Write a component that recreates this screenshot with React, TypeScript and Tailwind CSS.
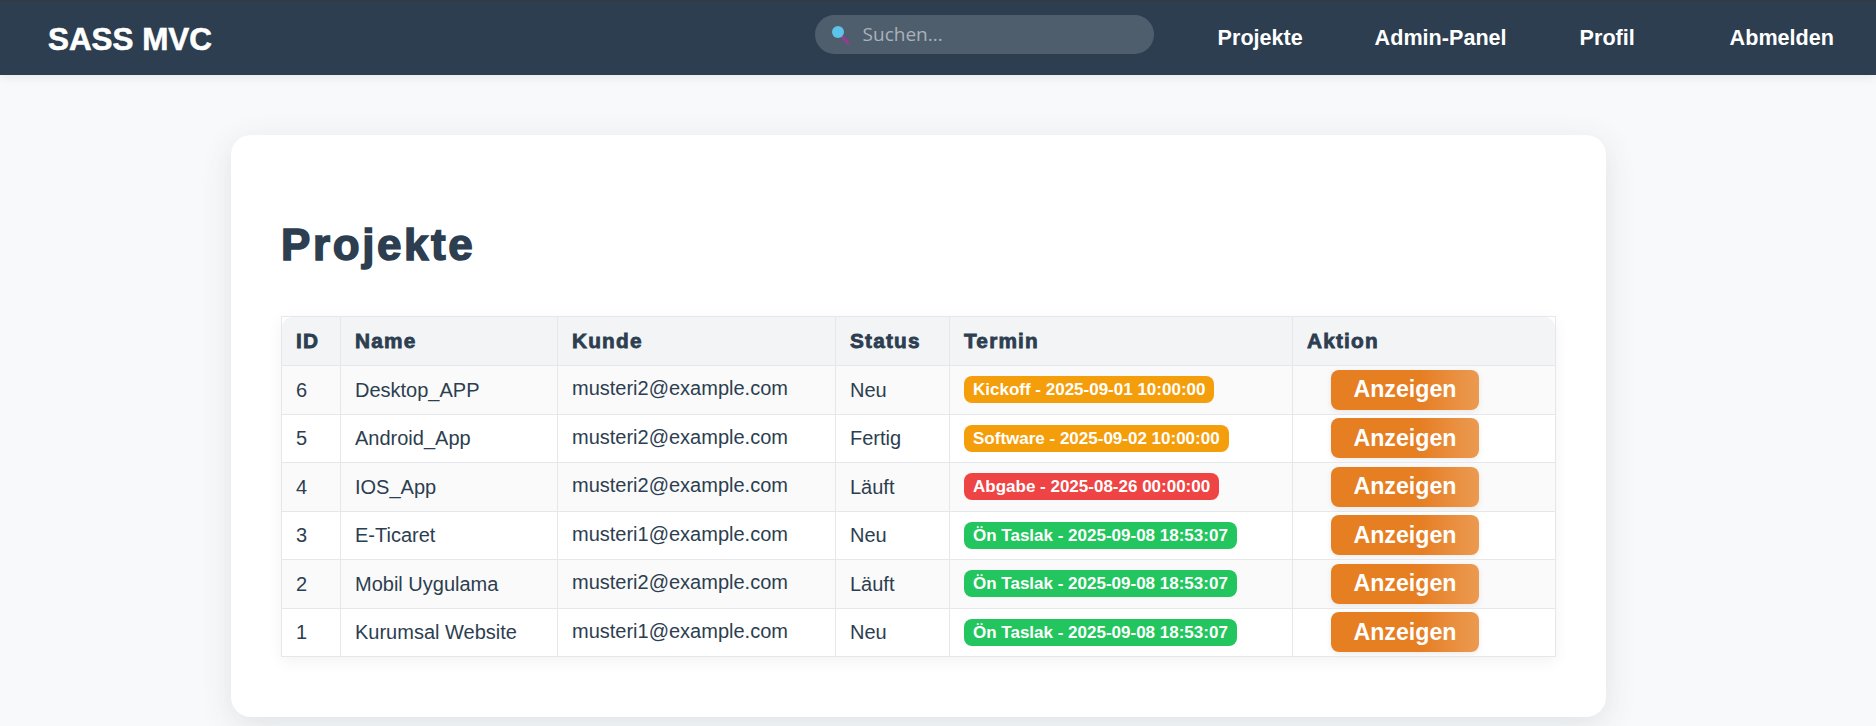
const links = ['Projekte', 'Admin-Panel', 'Profil', 'Abmelden'];

const rows = [
  { id: 6, name: 'Desktop_APP', customer: 'musteri2@example.com', status: 'Neu', date: 'Kickoff - 2025-09-01 10:00:00', color: 'bg-[#f59e0b]' },
  { id: 5, name: 'Android_App', customer: 'musteri2@example.com', status: 'Fertig', date: 'Software - 2025-09-02 10:00:00', color: 'bg-[#f59e0b]' },
  { id: 4, name: 'IOS_App', customer: 'musteri2@example.com', status: 'Läuft', date: 'Abgabe - 2025-08-26 00:00:00', color: 'bg-[#ef4444]' },
  { id: 3, name: 'E-Ticaret', customer: 'musteri1@example.com', status: 'Neu', date: 'Ön Taslak - 2025-09-08 18:53:07', color: 'bg-[#22c55e]' },
  { id: 2, name: 'Mobil Uygulama', customer: 'musteri2@example.com', status: 'Läuft', date: 'Ön Taslak - 2025-09-08 18:53:07', color: 'bg-[#22c55e]' },
  { id: 1, name: 'Kurumsal Website', customer: 'musteri1@example.com', status: 'Neu', date: 'Ön Taslak - 2025-09-08 18:53:07', color: 'bg-[#22c55e]' },
];

const headers = [
  { label: 'ID', width: 'w-[59px]' },
  { label: 'Name', width: 'w-[217px]' },
  { label: 'Kunde', width: 'w-[278px]' },
  { label: 'Status', width: 'w-[114px]' },
  { label: 'Termin', width: 'w-[343px]' },
  { label: 'Aktion', width: 'w-[263px]' },
];

const SearchIcon = () => (
  <svg className="h-[20px] w-[18px] shrink-0" viewBox="0 0 18 20">
    <path d="M10 11.5l6 6.5" stroke="#8e3f8f" strokeWidth="3.4" strokeLinecap="round" />
    <circle cx="6" cy="7" r="6" fill="#5bc4e8" />
  </svg>
);

const App = () => {
  return (
    <div className="min-h-[726px] bg-[#f8f9fa] font-['Liberation_Sans',sans-serif] text-[#2c3e50]">
      <nav className="relative flex h-[75px] items-center justify-between border-t border-[#333a40] bg-[#2c3e50] pl-[48px] pr-[42px] shadow-[0_2px_10px_rgba(0,0,0,0.08)]">
        <div className="mt-[4px] text-[31.4px] font-bold text-white [-webkit-text-stroke:0.6px_white]">SASS MVC</div>
        <div className="flex items-center">
          <div className="mb-[7px] mr-[64px] flex h-[39px] w-[339px] items-center rounded-[20px] bg-[#4f5e6d] pl-[17px]">
            <SearchIcon />
            <span className="ml-[13px] font-['Open_Sans',sans-serif] text-[19px] text-[#a9b2ba]">Suchen...</span>
          </div>
          <div className="flex">
            {links.map((link, i) => (
              <a
                key={link}
                className={`text-[21.6px] font-bold text-white ${i === 0 ? 'w-[157px]' : i === 1 ? 'w-[205px]' : i === 2 ? 'w-[150px]' : ''}`}
              >
                {link}
              </a>
            ))}
          </div>
        </div>
      </nav>

      <main className="ml-[231px] mt-[60px] w-[1375px] rounded-[20px] bg-white px-[50px] pb-[60px] pt-[84px] shadow-[0_8px_32px_rgba(44,62,80,0.12)]">
        <h1 className="mb-[45px] text-[44px] font-bold leading-[52px] tracking-[2.6px] [-webkit-text-stroke:1.5px_#2c3e50]">Projekte</h1>
        <table className="w-[1274px] table-fixed border-collapse text-[20px] shadow-[0_5px_15px_rgba(0,0,0,0.05)]">
          <thead>
            <tr className="h-[49px] bg-[#f3f4f6]">
              {headers.map((h, i) => (
                <th
                  key={h.label}
                  className={`${h.width} relative border border-[#e5e7eb] px-[14px] text-left text-[20.8px] font-bold tracking-[1.2px] [-webkit-text-stroke:0.8px_#2c3e50]`}
                >
                  {i === 0 && <span className="absolute left-0 top-0 h-[10px] w-[10px] bg-[radial-gradient(circle_at_100%_100%,transparent_9.5px,white_10px)]" />}
                  {i === 5 && <span className="absolute right-0 top-0 h-[10px] w-[10px] bg-[radial-gradient(circle_at_0%_100%,transparent_9.5px,white_10px)]" />}
                  {h.label}
                </th>
              ))}
            </tr>
          </thead>
          <tbody>
            {rows.map((row, i) => (
              <tr key={row.id} className={`h-[48.5px] ${i % 2 === 0 ? 'bg-[#fafafa]' : 'bg-white'}`}>
                <td className="border border-[#e5e7eb] px-[14px]">{row.id}</td>
                <td className="border border-[#e5e7eb] px-[14px]">{row.name}</td>
                <td className="border border-[#e5e7eb] px-[14px] pb-[3px]">{row.customer}</td>
                <td className="border border-[#e5e7eb] px-[14px]">{row.status}</td>
                <td className="border border-[#e5e7eb] px-[14px] pb-[3px]">
                  <span className={`inline-block rounded-[8px] px-[9px] py-[3px] text-[17px] font-bold leading-[21px] text-white ${row.color}`}>
                    {row.date}
                  </span>
                </td>
                <td className="border border-[#e5e7eb] px-[14px]">
                  <button className="ml-[24px] block h-[40px] w-[148px] rounded-[8px] bg-gradient-to-r from-[#e67e22] from-60% to-[#eb9a50] text-center text-[23.2px] font-bold text-white shadow-[0_2px_6px_rgba(0,0,0,0.08)]">
                    Anzeigen
                  </button>
                </td>
              </tr>
            ))}
          </tbody>
        </table>
      </main>
    </div>
  );
};

export default App;
